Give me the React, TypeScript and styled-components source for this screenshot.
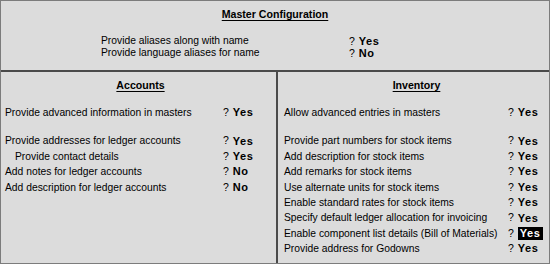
import React from 'react';
import styled, { createGlobalStyle } from 'styled-components';

const GlobalStyle = createGlobalStyle`
  html, body {
    margin: 0;
    padding: 0;
    background: #dcdcdc;
  }
  body {
    font-family: "Liberation Sans", Arial, sans-serif;
    font-size: 10.3px;
    color: #000;
  }
`;

const Frame = styled.div`
  width: 550px;
  height: 264px;
  box-sizing: border-box;
  border: 1px solid #7c7c7c;
  background: #dcdcdc;
  display: flex;
  flex-direction: column;
`;

const TopSection = styled.section`
  height: 71px;
  box-sizing: border-box;
  border-bottom: 2px solid #4a4a4a;
  padding-top: 6px;
`;

const Title = styled.h1`
  margin: 0;
  font-size: 10.6px;
  font-weight: bold;
  line-height: 14px;
  text-align: center;

  & span {
    text-decoration: underline;
    text-underline-offset: 2px;
  }
`;

const MasterList = styled.div`
  margin-top: 14px;
  padding-left: 100px;
`;

const Columns = styled.div`
  flex: 1;
  display: grid;
  grid-template-columns: 275px 1fr;
`;

const Column = styled.section<{ $divider?: boolean }>`
  padding: 6px 0 0 ${(p) => (p.$divider ? 6 : 4)}px;
  border-left: ${(p) => (p.$divider ? '2px solid #4a4a4a' : 'none')};
`;

const OptionList = styled.div`
  margin-top: 13px;
`;

const Row = styled.div<{ $label: number; $height: number }>`
  display: grid;
  grid-template-columns: ${(p) => p.$label}px auto;
  height: ${(p) => p.$height}px;
  line-height: ${(p) => p.$height}px;
  white-space: nowrap;
`;

const Label = styled.span<{ $indent?: boolean }>`
  padding-left: ${(p) => (p.$indent ? 10 : 0)}px;
`;

const Value = styled.span`
  display: flex;
  align-items: center;
  font-size: 10.5px;
`;

const Answer = styled.b<{ $active?: boolean }>`
  margin-left: 4px;
  padding: ${(p) => (p.$active ? '1px 3px 1px 2px' : '0')};
  font-size: 11px;
  letter-spacing: 0.5px;
  line-height: 11px;
  background: ${(p) => (p.$active ? '#000' : 'transparent')};
  color: ${(p) => (p.$active ? '#fff' : '#000')};
`;

const Spacer = styled.div`
  height: 13px;
`;

type Option = { label: string; value: string; indent?: boolean; active?: boolean; gapBefore?: boolean };

const master: Option[] = [
  { label: 'Provide aliases along with name', value: 'Yes' },
  { label: 'Provide language aliases for name', value: 'No' },
];

const accounts: Option[] = [
  { label: 'Provide advanced information in masters', value: 'Yes' },
  { label: 'Provide addresses for ledger accounts', value: 'Yes', gapBefore: true },
  { label: 'Provide contact details', value: 'Yes', indent: true },
  { label: 'Add notes for ledger accounts', value: 'No' },
  { label: 'Add description for ledger accounts', value: 'No' },
];

const inventory: Option[] = [
  { label: 'Allow advanced entries in masters', value: 'Yes' },
  { label: 'Provide part numbers for stock items', value: 'Yes', gapBefore: true },
  { label: 'Add description for stock items', value: 'Yes' },
  { label: 'Add remarks for stock items', value: 'Yes' },
  { label: 'Use alternate units for stock items', value: 'Yes' },
  { label: 'Enable standard rates for stock items', value: 'Yes' },
  { label: 'Specify default ledger allocation for invoicing', value: 'Yes' },
  { label: 'Enable component list details (Bill of Materials)', value: 'Yes', active: true },
  { label: 'Provide address for Godowns', value: 'Yes' },
];

const renderRows = (items: Option[], labelWidth: number, height: number) =>
  items.map((o) => (
    <React.Fragment key={o.label}>
      {o.gapBefore && <Spacer />}
      <Row $label={labelWidth} $height={height}>
        <Label $indent={o.indent}>{o.label}</Label>
        <Value>
          ?<Answer $active={o.active}>{o.value}</Answer>
        </Value>
      </Row>
    </React.Fragment>
  ));

export default function App() {
  return (
    <>
      <GlobalStyle />
      <Frame>
        <TopSection>
          <Title>
            <span>Master Configuration</span>
          </Title>
          <MasterList>{renderRows(master, 248, 12)}</MasterList>
        </TopSection>
        <Columns>
          <Column>
            <Title>
              <span>Accounts</span>
            </Title>
            <OptionList>{renderRows(accounts, 218, 15.4)}</OptionList>
          </Column>
          <Column $divider>
            <Title>
              <span>Inventory</span>
            </Title>
            <OptionList>{renderRows(inventory, 224, 15.4)}</OptionList>
          </Column>
        </Columns>
      </Frame>
    </>
  );
}
